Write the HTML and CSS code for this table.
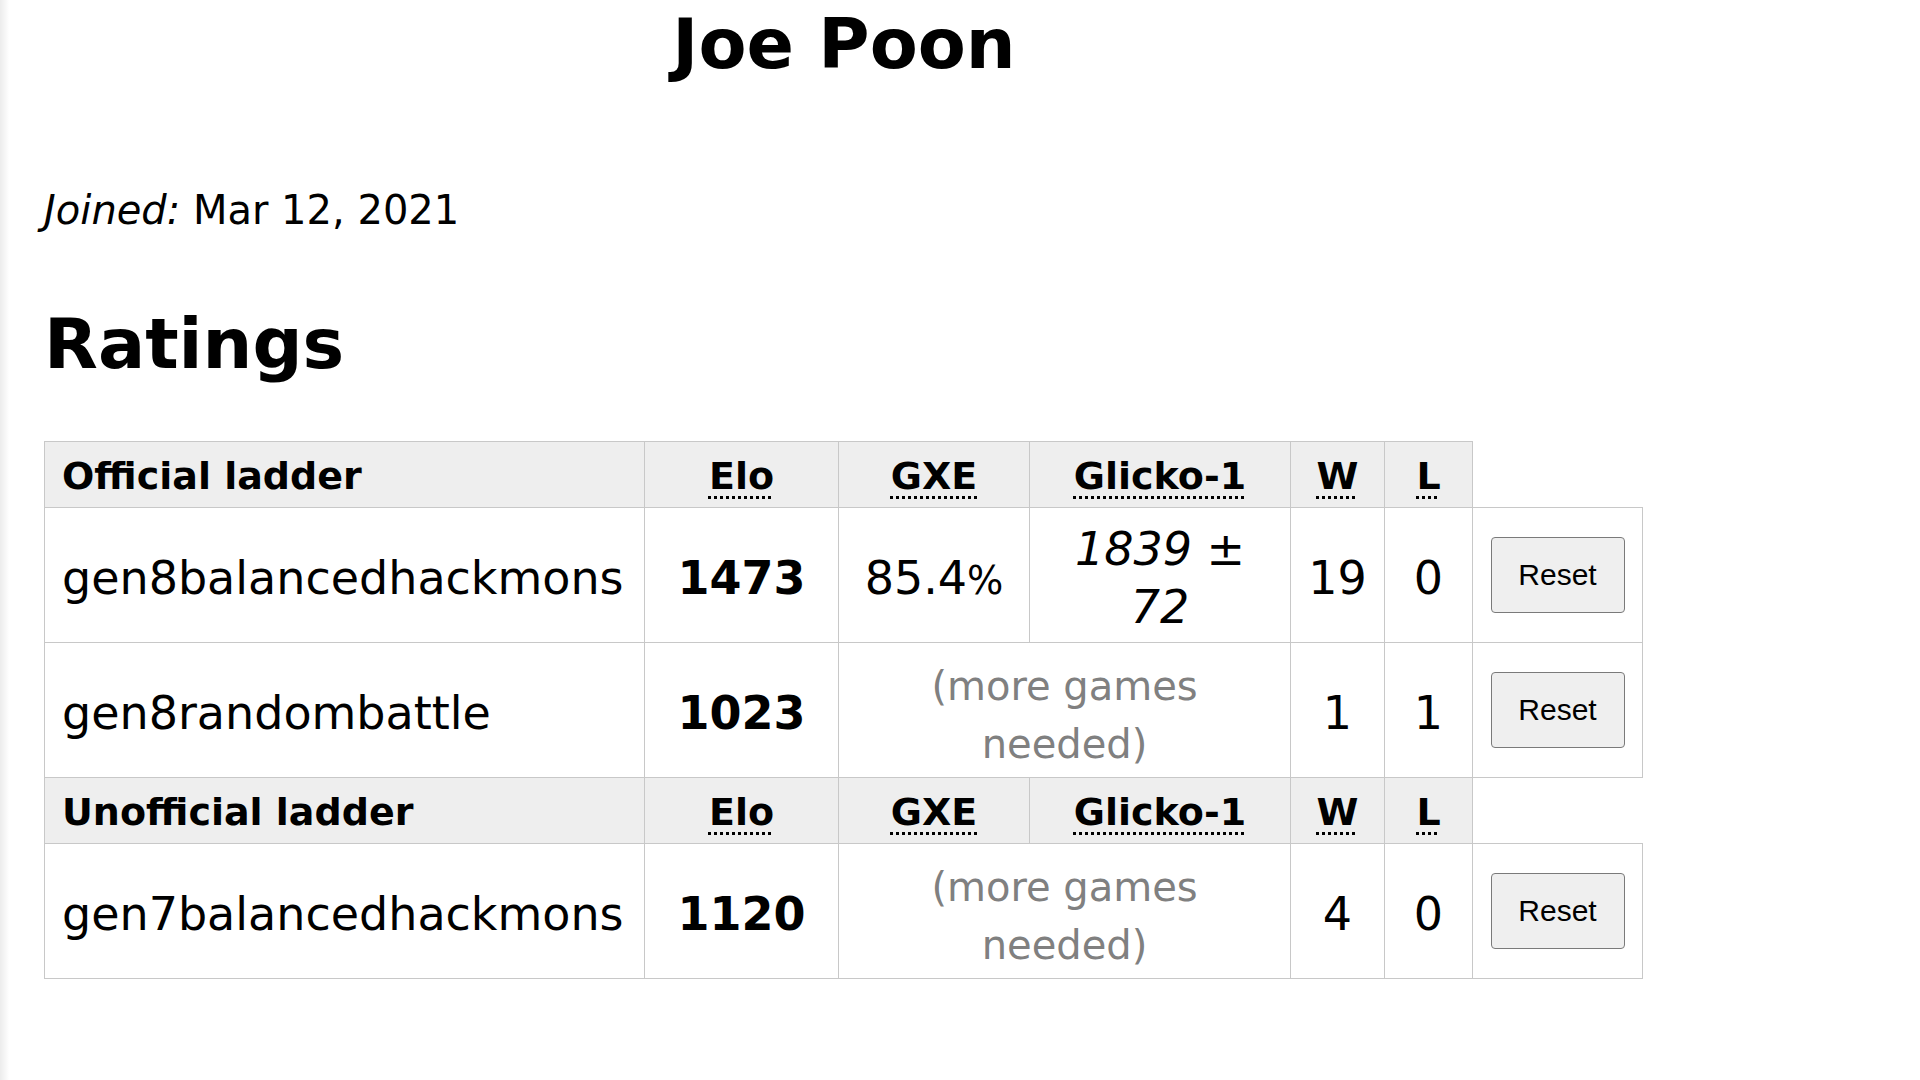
FILE: index.html
```html
<!DOCTYPE html>
<html lang="en">
<head>
<meta charset="utf-8">
<title>Joe Poon</title>
<link rel="stylesheet" href="styles.css">
</head>
<body>
<div class="page">
  <header class="masthead">
    <h1 class="username">Joe Poon</h1>
  </header>
  <main class="content">
    <p class="joined"><em>Joined:</em> Mar 12, 2021</p>
    <h2 class="section-title">Ratings</h2>
    <table class="ratings">
      <colgroup>
        <col class="c-format">
        <col class="c-elo">
        <col class="c-gxe">
        <col class="c-glicko">
        <col class="c-w">
        <col class="c-l">
        <col class="c-reset">
      </colgroup>
      <tbody>
        <tr class="head-row">
          <th class="ladder">Official ladder</th>
          <th><abbr title="Elo rating">Elo</abbr></th>
          <th><abbr title="user's percentage chance of winning a random battle">GXE</abbr></th>
          <th><abbr title="Glicko-1 rating: rating±deviation">Glicko-1</abbr></th>
          <th><abbr title="Wins">W</abbr></th>
          <th><abbr title="Losses">L</abbr></th>
        </tr>
        <tr>
          <td class="format">gen8balancedhackmons</td>
          <td class="num"><strong>1473</strong></td>
          <td class="num">85.4<small>%</small></td>
          <td class="num"><em>1839</em> ± <em>72</em></td>
          <td class="num">19</td>
          <td class="num">0</td>
          <td class="action"><button class="reset-btn" type="button">Reset</button></td>
        </tr>
        <tr>
          <td class="format">gen8randombattle</td>
          <td class="num"><strong>1023</strong></td>
          <td class="num muted" colspan="2"><span class="note">(more games needed)</span></td>
          <td class="num">1</td>
          <td class="num">1</td>
          <td class="action"><button class="reset-btn" type="button">Reset</button></td>
        </tr>
        <tr class="head-row">
          <th class="ladder">Unofficial ladder</th>
          <th><abbr title="Elo rating">Elo</abbr></th>
          <th><abbr title="user's percentage chance of winning a random battle">GXE</abbr></th>
          <th><abbr title="Glicko-1 rating: rating±deviation">Glicko-1</abbr></th>
          <th><abbr title="Wins">W</abbr></th>
          <th><abbr title="Losses">L</abbr></th>
        </tr>
        <tr>
          <td class="format">gen7balancedhackmons</td>
          <td class="num"><strong>1120</strong></td>
          <td class="num muted" colspan="2"><span class="note">(more games needed)</span></td>
          <td class="num">4</td>
          <td class="num">0</td>
          <td class="action"><button class="reset-btn" type="button">Reset</button></td>
        </tr>
      </tbody>
    </table>
  </main>
</div>
</body>
</html>
```

FILE: styles.css
```css
html, body {
  margin: 0;
  padding: 0;
}

body {
  background: linear-gradient(to right, #ececec 0, #f2f2f2 3px, #f8f8f8 6px, #ffffff 9px) no-repeat;
  background-color: #ffffff;
  min-height: 1080px;
  color: #000;
  font-family: "DejaVu Sans", Verdana, sans-serif;
}

.page {
  width: 1688px;
}

.masthead {
  padding-top: 3px;
  text-align: center;
}

.username {
  margin: 0;
  font-size: 70px;
  font-weight: bold;
  line-height: normal;
}

.content {
  padding-left: 44px;
}

.joined {
  margin: 102px 0 0 0;
  font-size: 40px;
  line-height: normal;
}

.section-title {
  margin: 70px 0 0 0;
  font-size: 70px;
  font-weight: bold;
  line-height: normal;
}

.ratings {
  margin-top: 56px;
  border-collapse: collapse;
  table-layout: fixed;
  width: 1598px;
}

.c-format { width: 600px; }
.c-elo { width: 194px; }
.c-gxe { width: 191px; }
.c-glicko { width: 261px; }
.c-w { width: 94px; }
.c-l { width: 88px; }
.c-reset { width: 170px; }

.ratings th,
.ratings td {
  border: 1px solid #c8c8c8;
}

.ratings th {
  padding: 11px 17px 7px;
  background: #eeeeee;
  font-size: 38px;
  line-height: 47px;
  font-weight: bold;
  text-align: center;
}

.ratings th.ladder {
  text-align: left;
}

.ratings abbr {
  text-decoration: underline dotted;
  text-decoration-thickness: 3px;
  text-underline-offset: 7px;
}

.ratings td {
  padding: 12px 17px 6px;
  font-size: 46px;
  line-height: 58px;
  vertical-align: middle;
}

.ratings td.format {
  text-align: left;
}

.ratings td.num {
  text-align: center;
}

.ratings td.muted {
  color: #808080;
}

.ratings td .note {
  font-size: 40px;
  line-height: 1;
}

.ratings td small {
  font-size: 0.83em;
  line-height: 1;
}

.ratings td.action {
  text-align: center;
  padding: 8px 16px;
}

.reset-btn {
  width: 134px;
  height: 76px;
  padding: 0;
  font-family: "Liberation Sans", Arial, sans-serif;
  font-size: 30px;
  color: #000;
  background: #efefef;
  border: 1px solid #7a7a7a;
  border-radius: 4px;
}
```
